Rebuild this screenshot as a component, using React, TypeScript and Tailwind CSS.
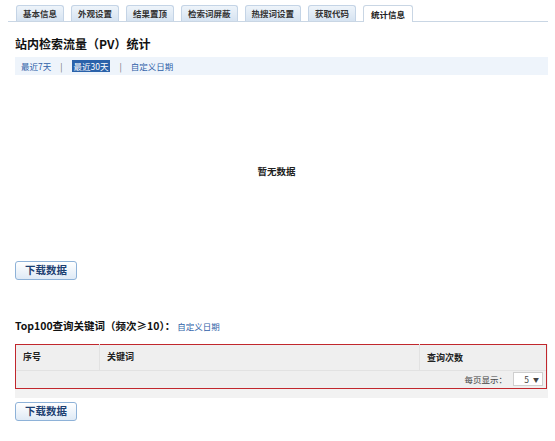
import React from 'react';

const tabs = ['基本信息', '外观设置', '结果置顶', '检索词屏蔽', '热搜词设置', '获取代码', '统计信息'];

function DownloadButton() {
  return (
    <div className="flex">
      <button className="h-[19px] w-[62px] rounded-[3px] border border-[#8eb2d8] bg-gradient-to-b from-[#ffffff] to-[#dfeaf6] text-[10.5px] font-bold leading-none text-[#1d3f72]">
        下载数据
      </button>
    </div>
  );
}

export default function App() {
  return (
    <div
      className="h-[441px] w-[555px] overflow-hidden bg-white text-[#333]"
      style={{ fontFamily: '"Noto Sans CJK SC", "Liberation Sans", sans-serif' }}
    >
      <div className="ml-[8px] mr-[7px] mt-[5px] flex gap-[7px] border-b border-[#c9d6e4] pl-[8px]">
        {tabs.map((t, i) => {
          const active = i === tabs.length - 1;
          return (
            <div
              key={t}
              className={
                active
                  ? '-mb-px flex h-[17px] items-center rounded-t-[3px] border border-b-0 border-[#c9d6e4] bg-white px-[7px] text-[8.5px] font-bold text-[#222]'
                  : 'flex h-[16px] items-center rounded-t-[3px] border border-b-0 border-[#c4d4e6] bg-gradient-to-b from-[#eef4fa] to-[#d6e3f1] px-[6px] text-[8.5px] font-bold text-[#333]'
              }
            >
              {t}
            </div>
          );
        })}
      </div>

      <div className="px-[15px] pr-[7px]">
        <div className="mt-[15px] text-[12px] font-bold leading-[14px] text-[#111]">站内检索流量（PV）统计</div>

        <div className="mt-[6px] flex h-[18px] items-center gap-[9px] bg-[#eef4fb] pl-[6px] text-[8.5px] text-[#2f5fa8]">
          <span>最近7天</span>
          <span className="text-[#666]">|</span>
          <span className="bg-[#2a62aa] px-[2px] leading-[12px] text-white">最近30天</span>
          <span className="text-[#666]">|</span>
          <span>自定义日期</span>
        </div>

        <div className="flex h-[186px] items-center justify-center pr-[10px] pt-[6px] text-[9.5px] font-bold text-[#222]">暂无数据</div>

        <DownloadButton />

        <div className="mt-[38px] flex items-baseline text-[10.5px] font-bold text-[#111]">
          Top100查询关键词（频次≥10）：
          <span className="ml-[2px] text-[8.5px] font-normal text-[#2f5fa8]">自定义日期</span>
        </div>

        <div className="mt-[10px] bg-[#f2f2f2] pb-[9px]">
          <div className="mr-[1px] border border-[#c1272d] bg-[#efefef]">
            <div className="flex h-[26px] items-center border-b border-[#e2e2e2] text-[9px] font-bold text-[#222]">
              <div className="w-[84px] border-r border-[#e2e2e2] pl-[7px] leading-[26px]">序号</div>
              <div className="flex-1 border-r border-[#e2e2e2] pl-[7px] leading-[26px]">关键词</div>
              <div className="w-[126px] pl-[7px]">查询次数</div>
            </div>
            <div className="flex h-[17px] items-center justify-end gap-[6px] pr-[3px] text-[8.5px] text-[#444]">
              <span>每页显示：</span>
              <div className="flex h-[14px] w-[30px] items-center justify-end gap-[4px] border border-[#cfcfcf] bg-white pr-[3px] text-[8.5px]">
                <span>5</span>
                <span className="text-[6px]">▼</span>
              </div>
            </div>
          </div>
        </div>

        <div className="mt-[4px]">
          <DownloadButton />
        </div>
      </div>
    </div>
  );
}
